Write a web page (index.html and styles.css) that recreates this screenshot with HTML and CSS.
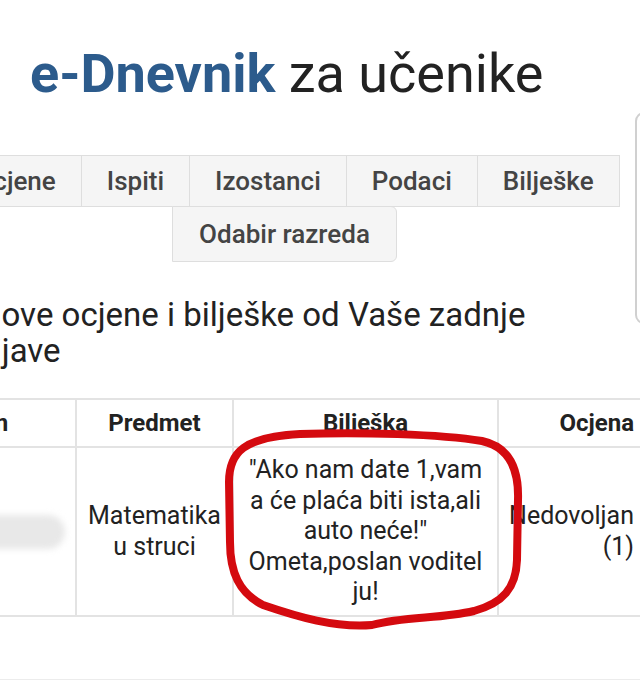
FILE: index.html
```html
<!DOCTYPE html>
<html lang="hr">
<head>
<meta charset="utf-8">
<title>e-Dnevnik za učenike</title>
<link rel="stylesheet" href="styles.css">
</head>
<body>
<div class="page">
  <h1 class="title"><span class="brand">e-Dnevnik</span> za učenike</h1>

  <ul class="tabs">
    <li class="tab">Ocjene</li>
    <li class="tab">Ispiti</li>
    <li class="tab">Izostanci</li>
    <li class="tab">Podaci</li>
    <li class="tab">Bilješke</li>
    <li class="tab tab-second">Odabir razreda</li>
  </ul>

  <h2 class="heading">Nove ocjene i bilješke od Vaše zadnje prijave</h2>

  <table class="grades">
    <colgroup>
      <col class="c-date">
      <col class="c-subject">
      <col class="c-note">
      <col class="c-grade">
    </colgroup>
    <thead>
      <tr>
        <th>Datum</th>
        <th>Predmet</th>
        <th>Bilješka</th>
        <th class="right">Ocjena</th>
      </tr>
    </thead>
    <tbody>
      <tr>
        <td class="date"><span class="blurred"></span></td>
        <td>Matematika u struci</td>
        <td class="note">"Ako nam date 1,vam a će plaća biti ista,ali auto neće!"<br>Ometa,poslan voditel<br>ju!</td>
        <td class="right grade">Nedovoljan (1)</td>
      </tr>
    </tbody>
  </table>

  <div class="footer-line"></div>
</div>

<div class="scroll-edge"></div>

<svg class="circle" width="640" height="688" viewBox="0 0 640 688" aria-hidden="true">
  <path d="M 300 434 C 360 432, 440 434, 482 441 C 510 447, 519 470, 518 500 L 517 560 C 516 588, 503 603, 474 611 C 440 619, 405 616, 372 625 C 335 628, 298 617, 263 605 C 239 593, 230 572, 230 542 L 229 482 C 229 452, 244 437, 300 434 Z"
        fill="none" stroke="#d40a0f" stroke-width="8" stroke-linejoin="round" stroke-linecap="round"/>
</svg>
</body>
</html>
```

FILE: styles.css
```css
html, body {
  margin: 0;
  padding: 0;
  background: #ffffff;
}

body {
  width: 640px;
  height: 688px;
  overflow: hidden;
  position: relative;
  font-family: Roboto, "Liberation Sans", Arial, sans-serif;
  color: #222;
}

.page {
  padding-top: 47px;
}

.title {
  margin: 0 0 0 30px;
  font-size: 54px;
  line-height: 54px;
  font-weight: 400;
  color: #222;
  white-space: nowrap;
}

.brand {
  font-weight: 700;
  color: #2c5b8c;
}

.tabs {
  list-style: none;
  margin: 54px 0 0 -65px;
  padding: 0;
  width: 700px;
  display: flex;
  flex-wrap: wrap;
  justify-content: center;
}

.tab {
  box-sizing: border-box;
  height: 52px;
  line-height: 50px;
  padding: 0 25px;
  font-size: 26px;
  font-weight: 500;
  color: #444;
  background: #f5f5f5;
  border: 1px solid #dedede;
  margin-left: -1px;
  white-space: nowrap;
}

.tab-second {
  height: 56px;
  line-height: 54px;
  margin-top: -1px;
  padding: 0 26px;
  border-radius: 0 6px 6px 0;
}

.heading {
  margin: 35px 0 0 -36px;
  width: 600px;
  text-indent: 14px;
  font-size: 33px;
  line-height: 36px;
  font-weight: 400;
  color: #222;
}

.grades {
  margin: 29px 0 0 -131px;
  border-collapse: collapse;
  table-layout: fixed;
  width: 776px;
}

.c-date { width: 206px; }
.c-subject { width: 157px; }
.c-note { width: 265px; }
.c-grade { width: 148px; }

.grades th,
.grades td {
  border: 2px solid #e3e3e3;
  padding: 0 6px;
  text-align: center;
  vertical-align: middle;
}

.grades th {
  height: 46px;
  font-size: 24px;
  font-weight: 700;
  color: #222;
}

.grades td {
  height: 167px;
  font-size: 25px;
  line-height: 30.5px;
  color: #222;
}

.grades .right {
  text-align: right;
  padding-right: 11px;
}

.grades td.grade {
  padding-left: 0;
}

.grades td.note {
  padding: 0 8px;
}

.grades td.date {
  text-align: right;
  padding-right: 10px;
}

.blurred {
  display: inline-block;
  width: 150px;
  height: 34px;
  border-radius: 17px;
  background: #e8e8e8;
  filter: blur(3px);
  vertical-align: middle;
}

.footer-line {
  margin-top: 62px;
  border-top: 1px solid #ececec;
}

.scroll-edge {
  position: absolute;
  left: 635px;
  top: 112px;
  width: 20px;
  height: 208px;
  border: 2px solid #d0d0d0;
  border-radius: 9px;
}

.circle {
  position: absolute;
  left: 0;
  top: 0;
  pointer-events: none;
}
```
